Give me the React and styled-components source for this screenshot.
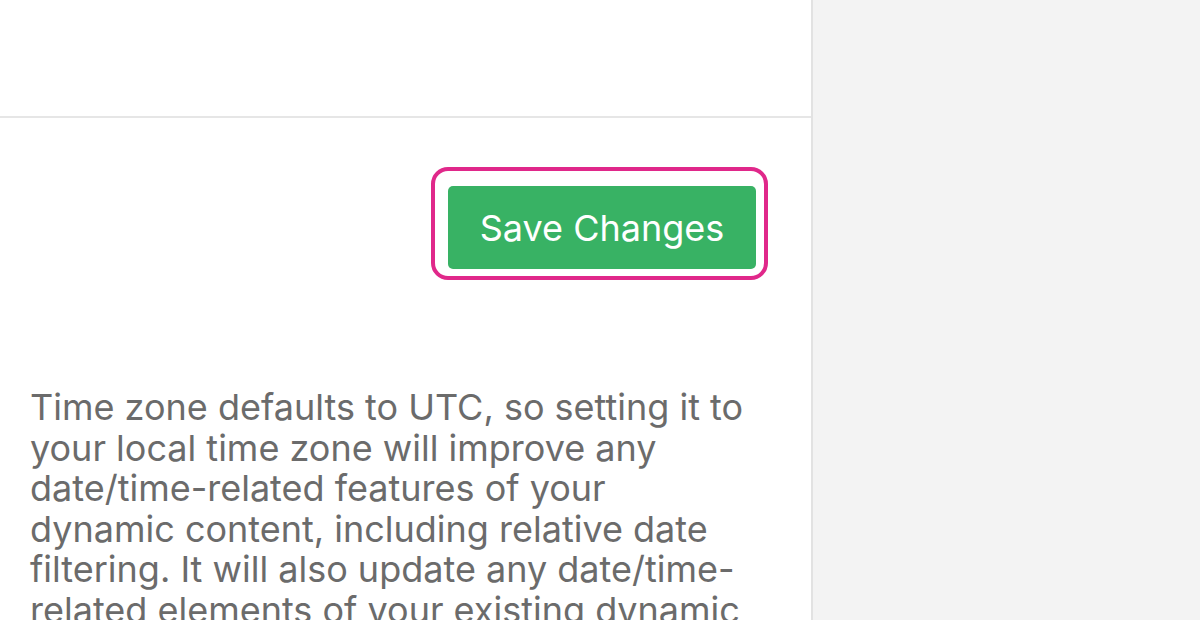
import styled, { createGlobalStyle } from "styled-components"

const GlobalStyle = createGlobalStyle`
  html, body {
    margin: 0;
    padding: 0;
    background-color: #f3f3f3;
    font-family: Inter, "Noto Sans", sans-serif;
  }
`

function App() {
  return (
    <Page>
      <GlobalStyle />
      <Panel>
        <Header />
        <Body>
          <Actions>
            <FocusRing>
              <SaveButton type="button">Save Changes</SaveButton>
            </FocusRing>
          </Actions>
          <Help>
            Time zone defaults to UTC, so setting it to your local time zone
            will improve any date/time-related features of your dynamic
            content, including relative date filtering. It will also update any
            date/time-related elements of your existing dynamic content to
            match the selected time zone.
          </Help>
        </Body>
      </Panel>
    </Page>
  )
}

const Page = styled.div`
  display: flex;
  height: 100vh;
  overflow: hidden;
`

const Panel = styled.div`
  width: 811px;
  flex-shrink: 0;
  background-color: #ffffff;
  border-right: 2px solid #e2e2e2;
  display: flex;
  flex-direction: column;
`

const Header = styled.div`
  height: 116px;
  flex-shrink: 0;
  border-bottom: 2px solid #e6e6e6;
`

const Body = styled.div`
  padding: 49px 30px 0;
`

const Actions = styled.div`
  display: flex;
  justify-content: flex-end;
  padding-right: 13px;
`

const FocusRing = styled.span`
  display: inline-flex;
  padding: 15px 8px 7px 13px;
  border: 4px solid #e0288a;
  border-radius: 17px;
`

const SaveButton = styled.button`
  width: 308px;
  height: 83px;
  border: none;
  border-radius: 5px;
  background-color: #38b264;
  color: #ffffff;
  font-family: Inter, "Noto Sans", sans-serif;
  font-size: 36px;
  font-weight: 400;
  cursor: pointer;
`

const Help = styled.p`
  margin: 107px 0 0;
  max-width: 715px;
  color: #6b6b6b;
  font-size: 36px;
  line-height: 40.5px;
`

export default App
